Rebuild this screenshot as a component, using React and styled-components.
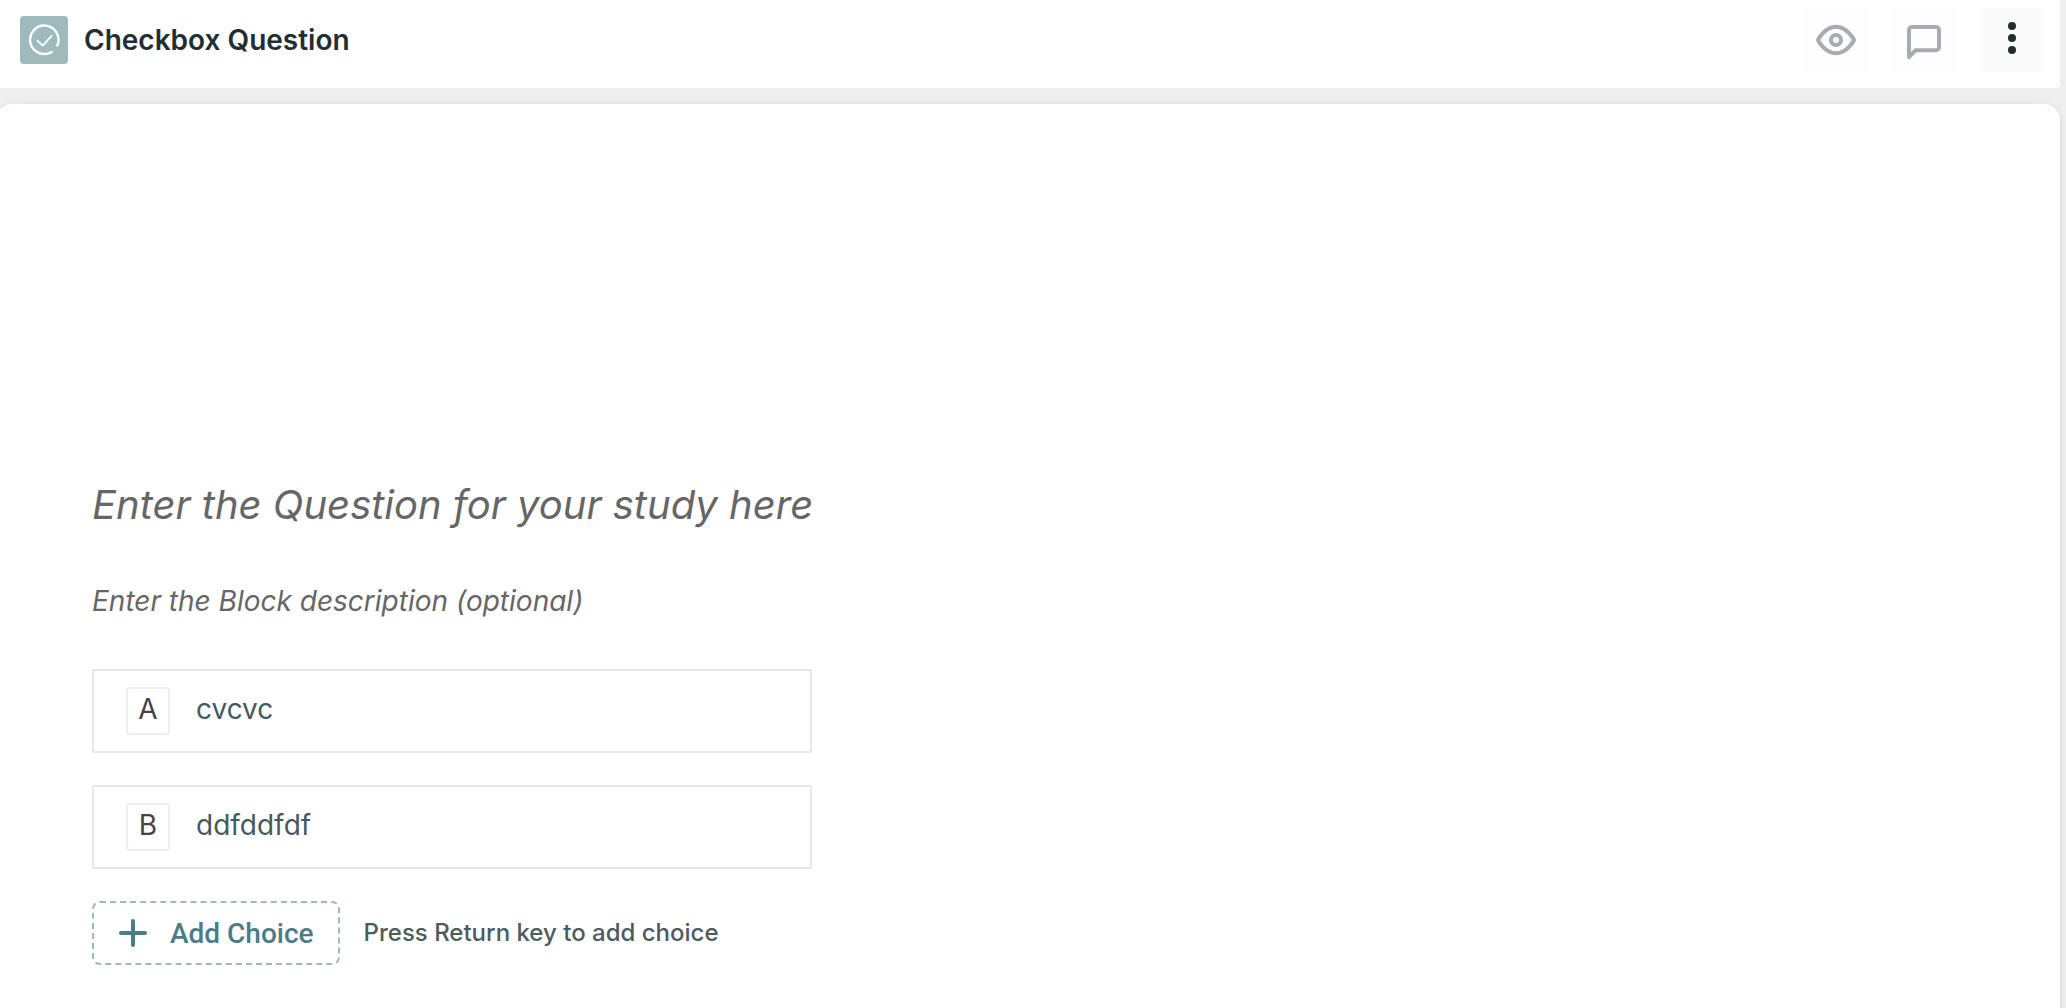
import { useState } from "react";
import styled, { createGlobalStyle } from "styled-components";

const GlobalStyle = createGlobalStyle`
  * {
    box-sizing: border-box;
  }

  body {
    margin: 0;
    background: #eeeeee;
    font-family: Inter, "Liberation Sans", sans-serif;
  }
`;

//Styled components
const Page = styled.div`
  height: 100vh;
  display: flex;
  flex-direction: column;
  gap: 16px;
  padding-right: 6px;
  overflow: hidden;
`;

const Header = styled.header`
  display: flex;
  align-items: center;
  justify-content: space-between;
  padding: 8px 16px 16px 20px;
  background: #ffffff;
  border-radius: 0 0 4px 0;
`;

const Heading = styled.div`
  display: flex;
  align-items: center;
  gap: 16px;
`;

const TypeIcon = styled.span`
  display: flex;
  align-items: center;
  justify-content: center;
  width: 48px;
  height: 48px;
  border-radius: 4px;
  background: #9fbabd;
`;

const Title = styled.h1`
  margin: 0;
  font-size: 28px;
  line-height: 40px;
  font-weight: 600;
  color: #212f31;
`;

const Actions = styled.div`
  display: flex;
  gap: 24px;
`;

const IconButton = styled.button`
  display: flex;
  align-items: center;
  justify-content: center;
  width: 64px;
  height: 64px;
  padding: 0;
  border: none;
  border-radius: 4px;
  background: ${({ $active }) => ($active ? "#fafafa" : "#fdfdfd")};
  color: ${({ $active }) => ($active ? "#212f31" : "#a6adad")};
  cursor: pointer;
`;

const Card = styled.main`
  flex: 1;
  margin-left: -4px;
  padding: 368px 96px 40px;
  background: #ffffff;
  border-radius: 16px 16px 0 0;
  box-shadow: 0 2px 6px rgba(0, 0, 0, 0.12);
`;

const Form = styled.form`
  display: flex;
  flex-direction: column;
  gap: 32px;
`;

const Field = styled.input`
  width: 100%;
  padding: 0;
  border: none;
  outline: none;
  background: transparent;
  font-family: inherit;
  font-size: ${({ $large }) => ($large ? "40px" : "28px")};
  color: #455a5e;

  &::placeholder {
    font-style: italic;
    color: #666666;
    opacity: 1;
  }
`;

const QuestionField = styled(Field)`
  height: 64px;
`;

const DescriptionField = styled(Field)`
  height: 69px;
  padding-bottom: 4px;
`;

const Choice = styled.label`
  display: flex;
  align-items: center;
  gap: 26px;
  width: 100%;
  max-width: 720px;
  height: 84px;
  padding: 0 32px;
  border: 2px solid #e8e8e8;
`;

const Letter = styled.span`
  display: flex;
  justify-content: center;
  width: 44px;
  height: 48px;
  border: 2px solid #eeeeee;
  border-radius: 4px;
  font-size: 28px;
  line-height: 40px;
  color: #444444;
`;

const ChoiceField = styled(Field)`
  flex: 1;
  min-width: 0;
  height: 48px;
  padding-bottom: 4px;
`;

const Footer = styled.div`
  display: flex;
  align-items: center;
  gap: 24px;
`;

const AddButton = styled.button`
  display: flex;
  align-items: center;
  gap: 22px;
  height: 64px;
  padding: 0 24px;
  border: 2px dashed #9fbabd;
  border-radius: 8px;
  background: transparent;
  font-family: Roboto, sans-serif;
  font-size: 28px;
  font-weight: 500;
  color: #4b7c87;
  cursor: pointer;
`;

const Hint = styled.span`
  font-size: 24px;
  line-height: 32px;
  font-weight: 500;
  color: #4d5b5b;
`;
//End Styled components

const CheckCircle = () => (
  <svg width="32" height="32" viewBox="0 0 32 32" fill="none" stroke="#ffffff" strokeLinecap="round" strokeLinejoin="round">
    <path d="M29.3 21.500a14.200 14.200 0 1 0-5.600 6.400" strokeWidth="2.4" />
    <path d="M9.6 16.8l5.2 4.8 8.8-9.8" strokeWidth="1.8" />
  </svg>
);

const Eye = () => (
  <svg width="40" height="32" viewBox="0 0 40 32" fill="none" stroke="currentColor" strokeWidth="4" strokeLinejoin="round">
    <path d="M2 16s6.500-13.300 18-13.300 18 13.300 18 13.300-6.500 13.300-18 13.300-18-13.300-18-13.300z" />
    <circle cx="20" cy="16" r="5" />
  </svg>
);

const Comment = () => (
  <svg width="40" height="40" viewBox="0 0 40 40" fill="none" stroke="currentColor" strokeWidth="4" strokeLinejoin="round">
    <path d="M5 37V10a3 3 0 0 1 3-3h24a3 3 0 0 1 3 3v17.300a3 3 0 0 1-3 3H11.500Z" />
  </svg>
);

const Dots = () => (
  <svg width="8" height="36" viewBox="0 0 8 36" fill="currentColor">
    <circle cx="4" cy="4" r="4" />
    <circle cx="4" cy="16" r="4" />
    <circle cx="4" cy="28" r="4" />
  </svg>
);

const Plus = () => (
  <svg width="30" height="30" viewBox="0 0 30 30" stroke="currentColor" strokeWidth="4" strokeLinecap="round">
    <path d="M15 3v24M3 15h24" />
  </svg>
);

const App = () => {
  const [choices, setChoices] = useState(["cvcvc", "ddfddfdf"]);

  const addChoice = () => setChoices([...choices, ""]);

  const editChoice = (index, value) =>
    setChoices(choices.map((choice, i) => (i === index ? value : choice)));

  // Return adds a new choice
  const handleKeyDown = (e) => {
    if (e.key === "Enter") {
      e.preventDefault();
      addChoice();
    }
  };

  return (
    <>
      <GlobalStyle />
      <Page>
        <Header>
          <Heading>
            <TypeIcon>
              <CheckCircle />
            </TypeIcon>
            <Title>Checkbox Question</Title>
          </Heading>
          <Actions>
            <IconButton aria-label="Preview">
              <Eye />
            </IconButton>
            <IconButton aria-label="Comments">
              <Comment />
            </IconButton>
            <IconButton $active aria-label="More options">
              <Dots />
            </IconButton>
          </Actions>
        </Header>
        <Card>
          <Form>
            <QuestionField
              $large
              aria-label="Question"
              placeholder="Enter the Question for your study here"
            />
            <DescriptionField
              aria-label="Description"
              placeholder="Enter the Block description (optional)"
            />
            {choices.map((choice, index) => (
              <Choice key={index}>
                <Letter>{String.fromCharCode(65 + index)}</Letter>
                <ChoiceField
                  value={choice}
                  onChange={(e) => editChoice(index, e.target.value)}
                  onKeyDown={handleKeyDown}
                />
              </Choice>
            ))}
            <Footer>
              <AddButton type="button" onClick={addChoice}>
                <Plus />
                Add Choice
              </AddButton>
              <Hint>Press Return key to add choice</Hint>
            </Footer>
          </Form>
        </Card>
      </Page>
    </>
  );
};

export default App;
